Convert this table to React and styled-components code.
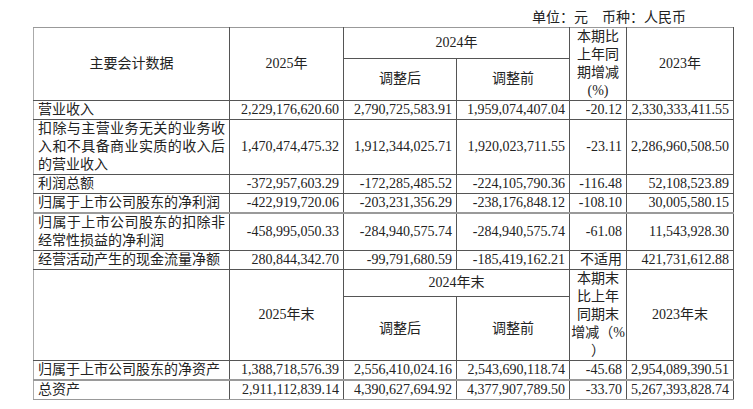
import React from 'react';
import styled, { createGlobalStyle } from 'styled-components';

const Global = createGlobalStyle`
  html, body { margin: 0; padding: 0; background: #fff; }
  body {
    font-family: "Liberation Serif", "Noto Sans CJK SC", serif;
    color: #222;
  }
`;

const Page = styled.div`
  padding: 9px 0 0 33px;
  width: 700px;
`;

const Unit = styled.div`
  font-size: 14px;
  line-height: 18px;
  text-align: right;
  padding-right: 47px;
`;

const Table = styled.table`
  border-collapse: collapse;
  table-layout: fixed;
  width: 700px;
  font-size: 14px;
  line-height: 18px;
`;

const Row = styled.tr`
  height: ${(p) => (p.$h ? `${p.$h}px` : 'auto')};
`;

const Cell = styled.td`
  border: 1px solid #555;
  padding: 0;
  vertical-align: middle;
  ${(p) => (p.$thickTop ? 'border-top: 2px solid #9a9a9a;' : '')}
  ${(p) => (p.$outerTop ? 'border-top-color: #999;' : '')}
  ${(p) => (p.$outerBottom ? 'border-bottom-color: #999;' : '')}
`;

const Head = styled(Cell)`
  text-align: center;
  ${(p) => (p.$first ? 'border-left-color: #aaa;' : '')}
`;

const Label = styled(Cell)`
  text-align: justify;
  padding: 0 4px;
  border-left-color: #aaa;
`;

const Num = styled(Cell)`
  text-align: right;
  padding-right: 4px;
  white-space: nowrap;
`;

const rows1 = [
  ['营业收入', '2,229,176,620.60', '2,790,725,583.91', '1,959,074,407.04', '-20.12', '2,330,333,411.55'],
  ['扣除与主营业务无关的业务收入和不具备商业实质的收入后的营业收入', '1,470,474,475.32', '1,912,344,025.71', '1,920,023,711.55', '-23.11', '2,286,960,508.50'],
  ['利润总额', '-372,957,603.29', '-172,285,485.52', '-224,105,790.36', '-116.48', '52,108,523.89'],
  ['归属于上市公司股东的净利润', '-422,919,720.06', '-203,231,356.29', '-238,176,848.12', '-108.10', '30,005,580.15'],
  ['归属于上市公司股东的扣除非经常性损益的净利润', '-458,995,050.33', '-284,940,575.74', '-284,940,575.74', '-61.08', '11,543,928.30'],
  ['经营活动产生的现金流量净额', '280,844,342.70', '-99,791,680.59', '-185,419,162.21', '不适用', '421,731,612.88'],
];

const rows2 = [
  ['归属于上市公司股东的净资产', '1,388,718,576.39', '2,556,410,024.16', '2,543,690,118.74', '-45.68', '2,954,089,390.51'],
  ['总资产', '2,911,112,839.14', '4,390,627,694.92', '4,377,907,789.50', '-33.70', '5,267,393,828.74'],
];

function DataRow({ r, thickTop, outerBottom }) {
  return (
    <Row>
      <Label $thickTop={thickTop} $outerBottom={outerBottom}>{r[0]}</Label>
      {r.slice(1).map((v, i) => (
        <Num key={i} $thickTop={thickTop} $outerBottom={outerBottom}>{v}</Num>
      ))}
    </Row>
  );
}

export default function App() {
  return (
    <>
      <Global />
      <Page>
        <Unit>单位：元　币种：人民币</Unit>
        <Table>
          <colgroup>
            <col style={{ width: 196 }} />
            <col style={{ width: 114 }} />
            <col style={{ width: 113 }} />
            <col style={{ width: 113 }} />
            <col style={{ width: 57 }} />
            <col style={{ width: 107 }} />
          </colgroup>
          <tbody>
            <Row $h={30}>
              <Head rowSpan={2} $first $outerTop>主要会计数据</Head>
              <Head rowSpan={2} $outerTop>2025年</Head>
              <Head colSpan={2} $outerTop>2024年</Head>
              <Head rowSpan={2} $outerTop>本期比<br />上年同<br />期增减<br />(%)</Head>
              <Head rowSpan={2} $outerTop>2023年</Head>
            </Row>
            <Row $h={41}>
              <Head>调整后</Head>
              <Head>调整前</Head>
            </Row>
            {rows1.map((r, i) => (
              <DataRow key={i} r={r} thickTop={i === 4} />
            ))}
            <Row $h={27}>
              <Head rowSpan={2} $first />
              <Head rowSpan={2}>2025年末</Head>
              <Head colSpan={2}>2024年末</Head>
              <Head rowSpan={2}>本期末<br />比上年<br />同期末<br />增减（%<br />）</Head>
              <Head rowSpan={2}>2023年末</Head>
            </Row>
            <Row $h={64}>
              <Head>调整后</Head>
              <Head>调整前</Head>
            </Row>
            <DataRow r={rows2[0]} />
            <DataRow r={rows2[1]} thickTop outerBottom />
          </tbody>
        </Table>
      </Page>
    </>
  );
}
